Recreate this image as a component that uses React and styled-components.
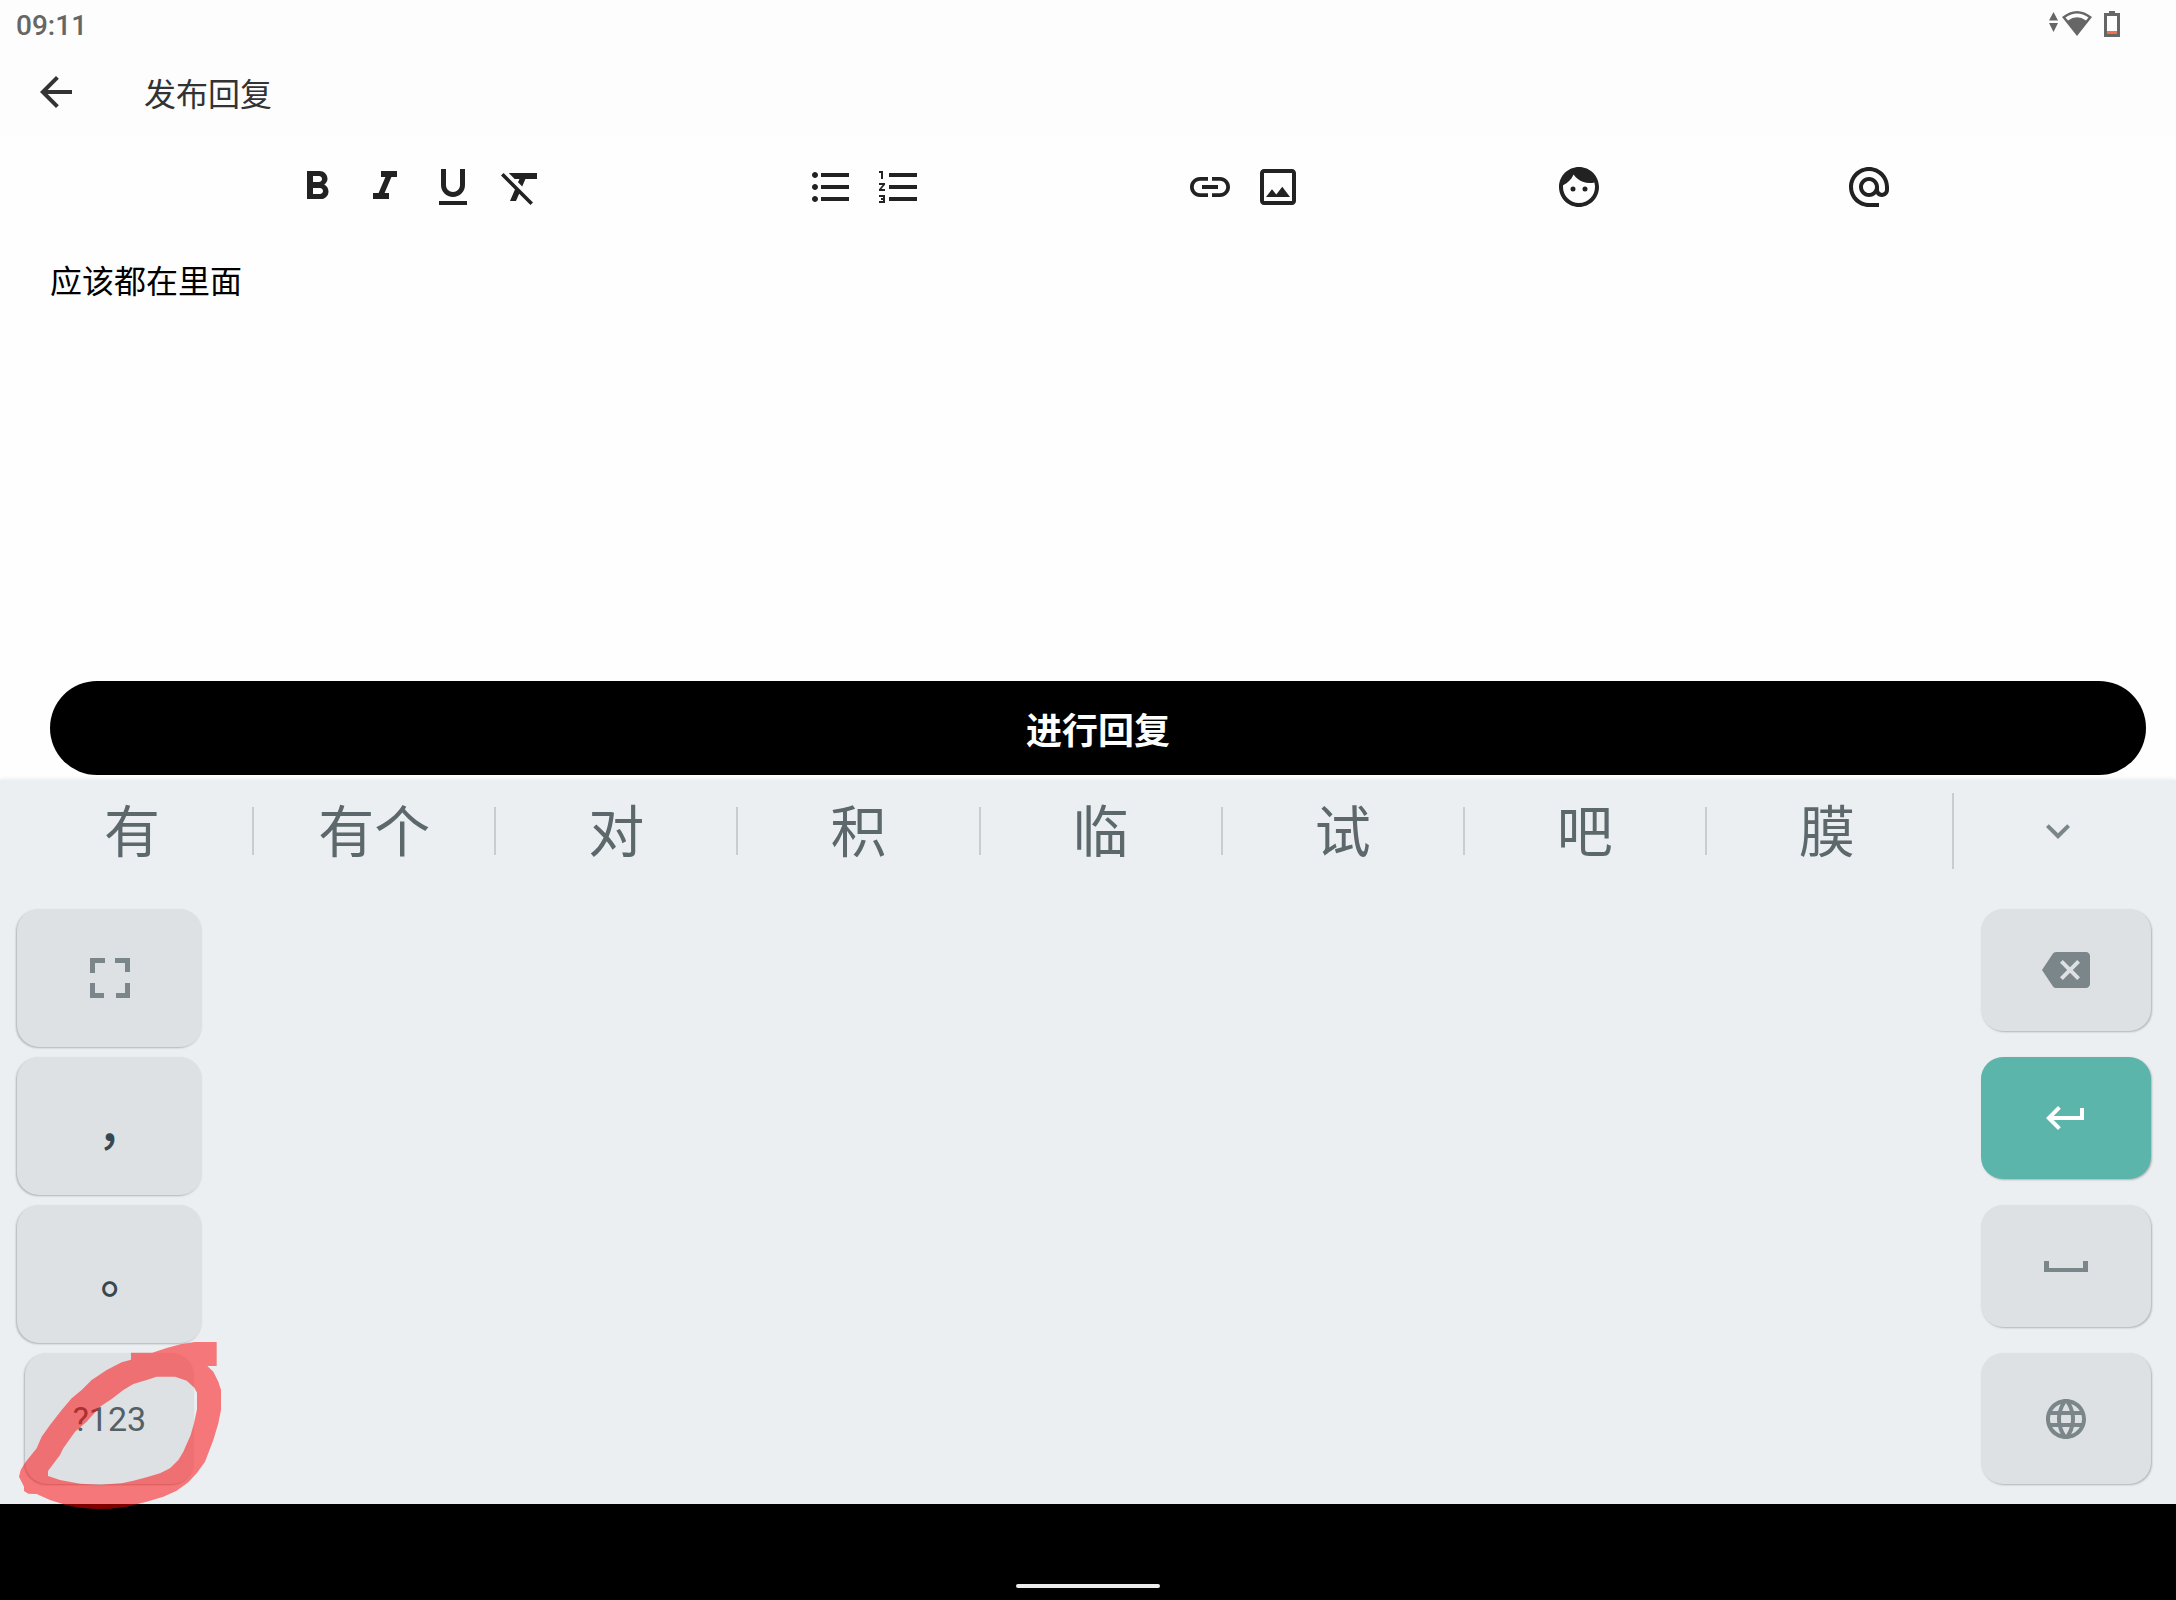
import React from "react";
import styled, { createGlobalStyle, css } from "styled-components";
import {
  MdArrowBack,
  MdFormatBold,
  MdFormatItalic,
  MdFormatUnderlined,
  MdFormatClear,
  MdFormatListBulleted,
  MdFormatListNumbered,
  MdLink,
  MdOutlineImage,
  MdFace,
  MdAlternateEmail,
  MdExpandMore,
  MdBackspace,
  MdKeyboardReturn,
  MdLanguage,
} from "react-icons/md";

const GlobalStyle = createGlobalStyle`
  *, *::before, *::after { box-sizing: border-box; }
  body {
    margin: 0;
    background: #fefefe;
    font-family: Roboto, "Noto Sans CJK SC", sans-serif;
  }
  button, textarea { font-family: inherit; }
`;

const Screen = styled.div`
  display: flex;
  flex-direction: column;
  min-height: 100vh;
`;

const StatusBar = styled.div`
  display: flex;
  align-items: center;
  justify-content: space-between;
  height: 48px;
  padding: 0 56px 0 16px;
  background: #fdfdfd;
  color: #666;
`;

const Clock = styled.time`
  padding-top: 4px;
  font-size: 28px;
  font-weight: 500;
  line-height: 44px;
`;

const Header = styled.header`
  display: flex;
  align-items: center;
  gap: 64px;
  height: 88px;
  padding: 0 32px;
  background: #fdfdfd;
  color: #333;
`;

const PlainButton = styled.button`
  display: flex;
  align-items: center;
  justify-content: center;
  padding: 0;
  border: 0;
  background: none;
  color: inherit;
  font-size: 48px;
`;

const Title = styled.h1`
  margin: 0;
  padding-top: 6px;
  font-size: 32px;
  font-weight: 400;
  line-height: 48px;
`;

const Toolbar = styled.div`
  display: flex;
  align-items: center;
  justify-content: space-evenly;
  height: 102px;
  padding: 0 30px 0 50px;
  color: #222;
`;

const ToolGroup = styled.div`
  display: flex;
  gap: 20px;
  margin-right: ${(p) => p.$trail}px;
`;

const Form = styled.form`
  display: flex;
  flex: 1;
  flex-direction: column;
  padding: 0 30px 5px 50px;
`;

const Editor = styled.textarea`
  flex: 1;
  width: 100%;
  padding: 20px 0;
  border: 0;
  outline: 0;
  resize: none;
  background: transparent;
  color: #000;
  font-size: 32px;
  line-height: 48px;
`;

const Submit = styled.button`
  height: 94px;
  padding: 0;
  border: 0;
  border-radius: 47px;
  background: #000;
  color: #fff;
  font-size: 36px;
  font-weight: 700;
`;

const Keyboard = styled.section`
  position: relative;
  background: #ebeff2;
  box-shadow: 0 -1px 4px rgba(0, 0, 0, 0.08);
`;

const CandidateBar = styled.div`
  display: flex;
  align-items: center;
  height: 102px;
`;

const Candidates = styled.div`
  display: flex;
  flex: 1;
  align-items: center;
  padding: 0 5px 0 12px;
`;

const Candidate = styled.button`
  flex: 1;
  height: 102px;
  padding: 4px 0 0;
  border: 0;
  background: none;
  color: #5c686c;
  font-size: 56px;
  line-height: 80px;
`;

const Divider = styled.span`
  flex: none;
  width: 2px;
  height: ${(p) => (p.$tall ? 76 : 48)}px;
  background: #c8cdd0;
`;

const Expand = styled(PlainButton)`
  width: 222px;
  padding-right: 14px;
  color: #7b868b;
`;

const Keys = styled.div`
  display: flex;
  justify-content: space-between;
  padding: 27px 25px 20px 17px;
`;

const KeyColumn = styled.div`
  display: flex;
  flex-direction: column;
  gap: ${(p) => p.$gap}px;
  width: ${(p) => p.$width}px;
`;

const Key = styled.button`
  display: flex;
  align-items: center;
  justify-content: center;
  height: ${(p) => p.$height}px;
  margin: 0 ${(p) => (p.$inset ? 8 : 0)}px;
  padding: 0;
  border: 0;
  border-radius: 22px;
  background: ${(p) => (p.$accent ? "#5cb5ab" : "#dde1e4")};
  color: ${(p) => (p.$accent ? "#fff" : "#7b868b")};
  font-size: 48px;
  box-shadow: ${(p) => (p.$side === "left" ? -1 : 1)}px 1px 2px rgba(0, 0, 0, 0.25);
  ${(p) =>
    p.$label &&
    css`
      color: #546065;
      font-size: 34px;
    `}
  ${(p) =>
    p.$mark &&
    css`
      padding-top: 24px;
      color: #37474f;
      font-family: "Noto Sans CJK TC", sans-serif;
      font-weight: 500;
      line-height: 48px;
    `}
`;

const Scribble = styled.svg`
  position: absolute;
  bottom: -36px;
  left: 0;
  pointer-events: none;
`;

const NavBar = styled.nav`
  display: flex;
  align-items: flex-end;
  justify-content: center;
  height: 96px;
  padding-bottom: 12px;
  background: #000;
`;

const Handle = styled.span`
  width: 144px;
  height: 4px;
  border-radius: 2px;
  background: #ececec;
`;

const StatusIcons = () => (
  <svg width="72" height="28" viewBox="0 0 72 28" fill="currentColor" aria-hidden="true">
    <path d="M5.500 2l4.500 8.500H1zM1 13h9l-4.500 9z" />
    <path
      fillRule="evenodd"
      d="M14 7Q29 -5 44 7L29 26zM17.500 7.600l2.500 3Q29 4 38 10.600l2.500-3Q29 -0.600 17.500 7.600z"
    />
    <path fillRule="evenodd" d="M61 1h6v2h5v24H56V3h5zM59 6v15h10V6z" />
    <path fill="#f0704a" d="M59 21h10v3H59z" />
  </svg>
);

const FrameIcon = () => (
  <svg width="40" height="40" viewBox="0 0 40 40" fill="currentColor" aria-hidden="true">
    <path d="M0 0h15v5H5v10H0zM25 0h15v14h-5V5H25zM0 25h5v10h9v5H0zM35 25h5v15H26v-5h9z" />
  </svg>
);

const SpaceIcon = () => (
  <svg width="44" height="11" viewBox="0 0 44 11" fill="currentColor" aria-hidden="true">
    <path d="M0 0h5v7h34V0h5v11H0z" />
  </svg>
);

const TOOLS = [
  {
    trail: 20,
    items: [
      ["粗体", MdFormatBold],
      ["斜体", MdFormatItalic],
      ["下划线", MdFormatUnderlined],
      ["清除格式", MdFormatClear],
    ],
  },
  {
    trail: 20,
    items: [
      ["无序列表", MdFormatListBulleted],
      ["有序列表", MdFormatListNumbered],
    ],
  },
  {
    trail: 10,
    items: [
      ["链接", MdLink],
      ["图片", MdOutlineImage],
    ],
  },
  { trail: 0, items: [["表情", MdFace]] },
  { trail: 10, items: [["提及", MdAlternateEmail]] },
];

const WORDS = ["有", "有个", "对", "积", "临", "试", "吧", "膜"];

export default function App() {
  return (
    <Screen>
      <GlobalStyle />
      <StatusBar>
        <Clock>09:11</Clock>
        <StatusIcons />
      </StatusBar>
      <Header>
        <PlainButton type="button" aria-label="返回">
          <MdArrowBack />
        </PlainButton>
        <Title>发布回复</Title>
      </Header>
      <Toolbar role="toolbar" aria-label="格式">
        {TOOLS.map((group, i) => (
          <ToolGroup key={i} $trail={group.trail}>
            {group.items.map(([label, Icon]) => (
              <PlainButton key={label} type="button" aria-label={label}>
                <Icon />
              </PlainButton>
            ))}
          </ToolGroup>
        ))}
      </Toolbar>
      <Form onSubmit={(e) => e.preventDefault()}>
        <Editor aria-label="回复内容" defaultValue="应该都在里面" spellCheck={false} />
        <Submit type="submit">进行回复</Submit>
      </Form>
      <Keyboard aria-label="键盘">
        <CandidateBar>
          <Candidates>
            {WORDS.map((word, i) => (
              <React.Fragment key={word}>
                {i > 0 && <Divider />}
                <Candidate type="button">{word}</Candidate>
              </React.Fragment>
            ))}
          </Candidates>
          <Divider $tall />
          <Expand type="button" aria-label="展开候选词">
            <MdExpandMore />
          </Expand>
        </CandidateBar>
        <Keys>
          <KeyColumn $width={185} $gap={10}>
            <Key type="button" $side="left" $height={138} aria-label="全屏手写">
              <FrameIcon />
            </Key>
            <Key type="button" $side="left" $height={138} $mark>
              ，
            </Key>
            <Key type="button" $side="left" $height={138} $mark>
              。
            </Key>
            <Key type="button" $side="left" $height={131} $inset $label>
              ?123
            </Key>
          </KeyColumn>
          <KeyColumn $width={170} $gap={26}>
            <Key type="button" $side="right" $height={122} aria-label="退格">
              <MdBackspace />
            </Key>
            <Key type="button" $side="right" $height={122} $accent aria-label="换行">
              <MdKeyboardReturn />
            </Key>
            <Key type="button" $side="right" $height={122} aria-label="空格">
              <SpaceIcon />
            </Key>
            <Key type="button" $side="right" $height={131} aria-label="切换语言">
              <MdLanguage />
            </Key>
          </KeyColumn>
        </Keys>
        <Scribble width="260" height="220" viewBox="0 0 780 660" aria-hidden="true">
          <path
            fill="#f00"
            fillOpacity="0.5"
            fillRule="evenodd"
            d="M393 98H457L500 84L545 72L585 66H650V138H622L640 155L655 185L663 210V270L655 310L640 360L615 425L590 460L565 487L530 512L490 530L440 545L380 560L330 566L290 567L240 563L200 556L150 540L110 522L85 521L72 513V500L57 470L62 450L75 428L110 385L125 350L150 315L185 270L215 235L245 210L275 180L320 150L365 127L393 119zM144 453L180 405L190 385L225 335L260 305L300 260L335 237L370 210L400 192L440 180L470 170H525L560 182L583 203L591 218V268L582 310L572 345L550 395L535 420L510 445L480 460L440 472L400 482L365 490L300 494L240 491L180 480L144 468z"
          />
        </Scribble>
      </Keyboard>
      <NavBar>
        <Handle />
      </NavBar>
    </Screen>
  );
}
